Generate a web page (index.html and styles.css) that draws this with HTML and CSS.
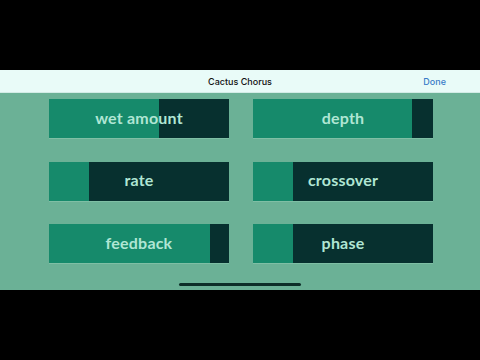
FILE: index.html
```html
<!DOCTYPE html>
<html>
<head>
    <title>Cactus Chorus</title>
    <link rel="stylesheet" href="styles.css">
</head>
<body>
    <div class="screen">
        <div class="bezel"></div>
        <div class="navbar">
            <span></span>
            <span class="nav-title">Cactus Chorus</span>
            <span class="nav-done">Done</span>
        </div>
        <div class="panel">
            <div class="grid">
                <div class="slider"><div class="fill" style="width: 110px;"></div><span class="label">wet amount</span></div>
                <div class="slider"><div class="fill" style="width: 159px;"></div><span class="label">depth</span></div>
                <div class="slider"><div class="fill" style="width: 40px;"></div><span class="label">rate</span></div>
                <div class="slider"><div class="fill" style="width: 40px;"></div><span class="label">crossover</span></div>
                <div class="slider"><div class="fill" style="width: 161px;"></div><span class="label">feedback</span></div>
                <div class="slider"><div class="fill" style="width: 40px;"></div><span class="label">phase</span></div>
            </div>
            <div class="home-bar"></div>
        </div>
        <div class="bezel"></div>
    </div>
</body>
</html>
```

FILE: styles.css
```css
body {
    margin: 0;
    background-color: #000;
}
.screen {
    width: 480px;
    height: 360px;
    display: flex;
    flex-direction: column;
}
.bezel {
    height: 70px;
    background-color: #000;
}
.navbar {
    height: 23px;
    box-sizing: border-box;
    background-color: #e9fbf8;
    border-bottom: 1px solid #d3ece6;
    display: grid;
    grid-template-columns: 1fr auto 1fr;
    align-items: center;
    font-family: "Inter", "Liberation Sans", sans-serif;
    font-size: 9px;
    padding: 1px 34px 0 0;
}
.nav-title {
    color: #111;
    font-weight: 500;
    padding-left: 34px;
}
.nav-done {
    justify-self: end;
    color: #3a7bc8;
    font-weight: 500;
}
.panel {
    flex: 1;
    background-color: #6bb196;
    display: flex;
    flex-direction: column;
    padding: 6px 0 0 49px;
}
.grid {
    display: grid;
    grid-template-columns: 180px 180px;
    grid-auto-rows: 39px;
    column-gap: 24px;
    row-gap: 23.5px;
}
.slider {
    display: grid;
    background-color: #07302f;
    box-shadow: 0 1px 0 rgba(140, 200, 175, 0.6);
}
.fill {
    grid-area: 1 / 1;
    height: 100%;
    background-color: #168a6b;
}
.label {
    grid-area: 1 / 1;
    align-self: center;
    justify-self: center;
    padding-bottom: 3px;
    font-family: "Lato", "Open Sans", sans-serif;
    font-weight: 700;
    font-size: 16px;
    color: #b0e6d4;
    letter-spacing: 0.2px;
}
.home-bar {
    margin-top: auto;
    margin-bottom: 4px;
    margin-left: 130px;
    width: 122px;
    height: 3px;
    border-radius: 2px;
    background-color: #0d2e28;
}
```
